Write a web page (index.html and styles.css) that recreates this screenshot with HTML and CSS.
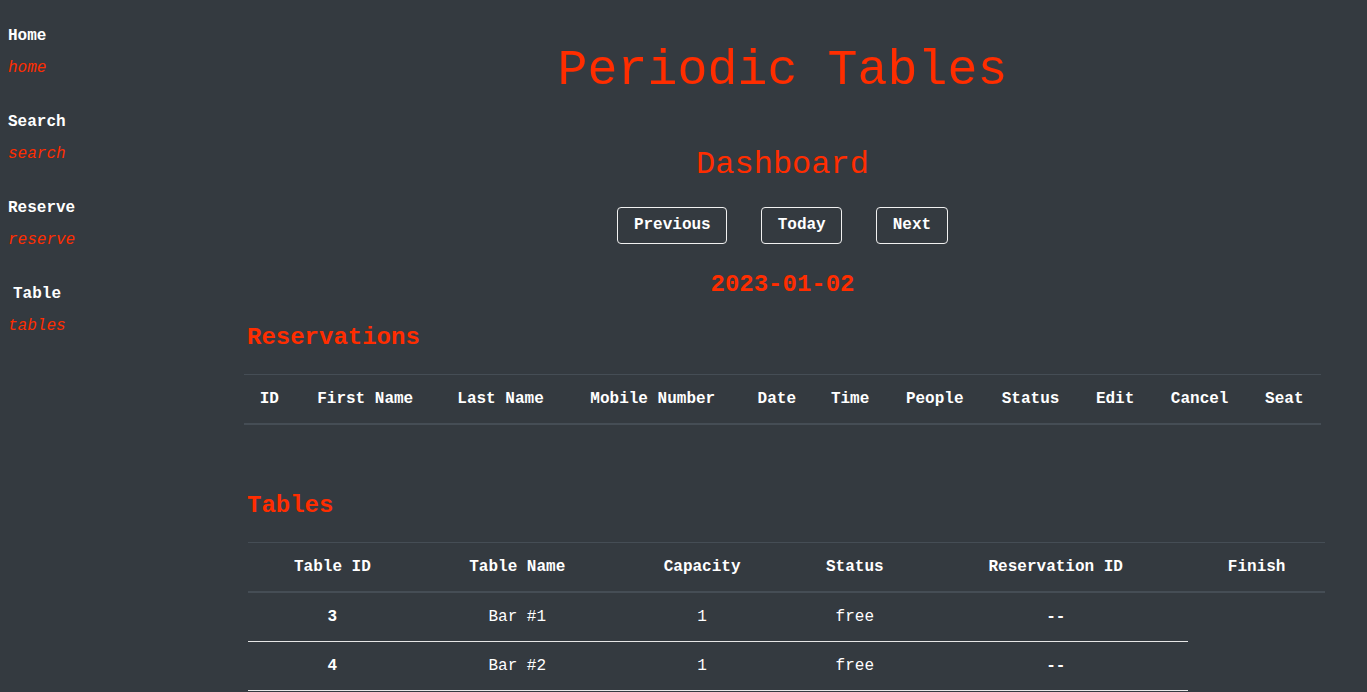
FILE: index.html
```html
<!DOCTYPE html>
<html lang="en">
<head>
<meta charset="utf-8">
<title>Periodic Tables</title>
<link rel="stylesheet" href="styles.css">
</head>
<body>
<div class="layout">
  <nav class="sidebar">
    <div class="nav-item">
      <div class="nav-label">Home</div>
      <a class="nav-link" href="#">home</a>
    </div>
    <div class="nav-item">
      <div class="nav-label">Search</div>
      <a class="nav-link" href="#">search</a>
    </div>
    <div class="nav-item">
      <div class="nav-label">Reserve</div>
      <a class="nav-link" href="#">reserve</a>
    </div>
    <div class="nav-item">
      <div class="nav-label nav-label-indent">Table</div>
      <a class="nav-link" href="#">tables</a>
    </div>
  </nav>
  <main class="main">
    <h1 class="app-title">Periodic Tables</h1>
    <h2 class="page-title">Dashboard</h2>
    <div class="date-nav">
      <button class="btn">Previous</button>
      <button class="btn">Today</button>
      <button class="btn">Next</button>
    </div>
    <div class="date">2023-01-02</div>

    <h3 class="section-title">Reservations</h3>
    <table class="data-table">
      <thead>
        <tr>
          <th>ID</th><th>First Name</th><th>Last Name</th><th>Mobile Number</th><th>Date</th><th>Time</th><th>People</th><th>Status</th><th>Edit</th><th>Cancel</th><th>Seat</th>
        </tr>
      </thead>
      <tbody></tbody>
    </table>

    <h3 class="section-title section-title-tables">Tables</h3>
    <div class="tables-wrap">
      <table class="data-table">
        <thead>
          <tr>
            <th>Table ID</th><th>Table Name</th><th>Capacity</th><th>Status</th><th>Reservation ID</th><th>Finish</th>
          </tr>
        </thead>
        <tbody>
          <tr><th>3</th><td>Bar #1</td><td>1</td><td>free</td><th>--</th></tr>
          <tr><th>4</th><td>Bar #2</td><td>1</td><td>free</td><th>--</th></tr>
        </tbody>
      </table>
    </div>
  </main>
</div>
</body>
</html>
```
FILE: styles.css
```css
html, body {
  margin: 0;
  padding: 0;
  background: #343a40;
}
body {
  font-family: "Liberation Mono", "Courier New", monospace;
  font-size: 16px;
  color: #ffffff;
  min-height: 692px;
}
.layout {
  display: flex;
  align-items: flex-start;
}
.sidebar {
  width: 236px;
  padding: 24px 0 0 8px;
  flex-shrink: 0;
}
.nav-item {
  display: flex;
  flex-direction: column;
  gap: 8px;
  margin-bottom: 30px;
}
.nav-label {
  font-weight: bold;
  line-height: 24px;
}
.nav-label-indent {
  padding-left: 5px;
}
.nav-link {
  color: #ff2d00;
  font-style: italic;
  line-height: 24px;
  text-decoration: none;
}
.main {
  width: 1077px;
  flex-shrink: 0;
}
.app-title {
  margin: 41px 0 0;
  font-size: 50px;
  line-height: 60px;
  font-weight: normal;
  color: #ff2d00;
  text-align: center;
}
.page-title {
  margin: 45px 0 0;
  font-size: 32px;
  line-height: 38px;
  font-weight: normal;
  color: #ff2d00;
  text-align: center;
}
.date-nav {
  margin-top: 23px;
  display: flex;
  justify-content: center;
  gap: 34px;
}
.btn {
  font-family: inherit;
  font-size: 16px;
  font-weight: bold;
  line-height: 19px;
  color: #ffffff;
  background: transparent;
  border: 1px solid #f0f0f0;
  border-radius: 4px;
  padding: 8px 15.5px;
}
.date {
  margin-top: 26px;
  font-size: 24px;
  line-height: 29px;
  font-weight: bold;
  color: #ff2d00;
  text-align: center;
}
.section-title {
  margin: 24px 0 0;
  padding-left: 3px;
  font-size: 24px;
  line-height: 29px;
  font-weight: bold;
  color: #ff2d00;
}
.section-title-tables {
  margin-top: 66px;
}
.data-table {
  width: 1077px;
  margin-top: 22px;
  border-collapse: collapse;
}
.data-table th,
.data-table td {
  padding: 12px;
  line-height: 24px;
  text-align: center;
  font-size: 16px;
  color: #ffffff;
}
.data-table thead th {
  border-top: 1px solid #454d55;
  border-bottom: 2px solid #454d55;
  font-weight: bold;
}
.data-table tbody th,
.data-table tbody td {
  border-bottom: 1px solid #e6e6e6;
}
.data-table tbody td {
  font-weight: normal;
}
.tables-wrap {
  padding-left: 4px;
}
.tables-wrap .data-table {
  margin-top: 22px;
}
```
